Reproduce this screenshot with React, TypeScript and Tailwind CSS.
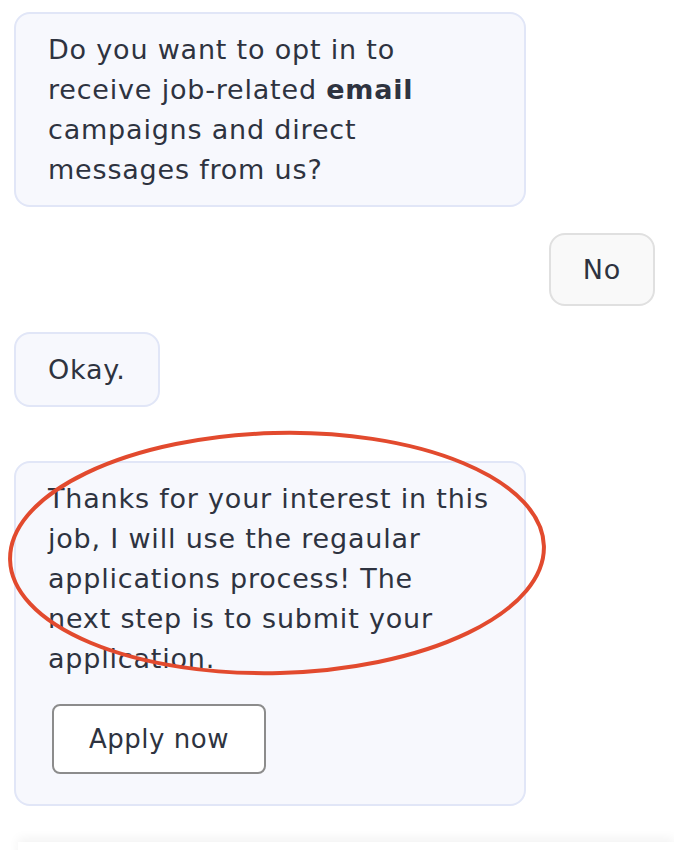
import React from 'react';

const font = { fontFamily: '"DejaVu Sans", "Noto Sans", sans-serif' };

function BotBubble({ children, className = '' }: { children: React.ReactNode; className?: string }) {
  return (
    <div
      className={`max-w-[512px] rounded-[16px] border-2 border-[#e1e6f7] bg-[#f7f8fd] px-[32px] pt-[16px] pb-[15px] text-[27px] leading-[40px] tracking-[0.8px] text-[#2e3340] ${className}`}
    >
      {children}
    </div>
  );
}

export default function App() {
  return (
    <div className="relative h-[850px] w-[674px] overflow-hidden bg-white" style={font}>
      <div className="flex flex-col items-start px-[14px] pt-[12px]">
        <BotBubble className="w-[512px]">
          <p className="whitespace-nowrap">
            Do you want to opt in to
            <br />
            receive job-related <b className="font-bold">email</b>
            <br />
            campaigns and direct
            <br />
            messages from us?
          </p>
        </BotBubble>

        <div className="mt-[26px] self-end mr-[5px] rounded-[16px] border-2 border-[#e0e0e0] bg-[#f9f9f9] px-[32px] pt-[15px] pb-[14px] text-[27px] leading-[40px] tracking-[0.8px] text-[#2e3340]">
          No
        </div>

        <BotBubble className="mt-[26px]">Okay.</BotBubble>

        <BotBubble className="mt-[54px] w-[512px] pb-[30px]">
          <p className="whitespace-nowrap">
            Thanks for your interest in this
            <br />
            job, I will use the regaular
            <br />
            applications process! The
            <br />
            next step is to submit your
            <br />
            application.
          </p>
          <button className="mt-[25px] ml-[4px] h-[70px] w-[214px] rounded-[8px] border-2 border-[#8c8c8c] bg-white text-[26px] tracking-[0.5px] text-[#2e3340]">
            Apply now
          </button>
        </BotBubble>
      </div>

      {/* red annotation ring */}
      <svg
        className="pointer-events-none absolute left-0 top-0"
        width="674"
        height="850"
        viewBox="0 0 674 850"
      >
        <ellipse
          cx="277"
          cy="553"
          rx="267"
          ry="120"
          transform="rotate(-1.5 277 553)"
          fill="none"
          stroke="#e24a2e"
          strokeWidth="4"
        />
      </svg>

      <div className="absolute bottom-[-40px] left-[18px] right-0 h-[48px] bg-white shadow-[0_-4px_10px_rgba(0,0,0,0.05)]" />
    </div>
  );
}
